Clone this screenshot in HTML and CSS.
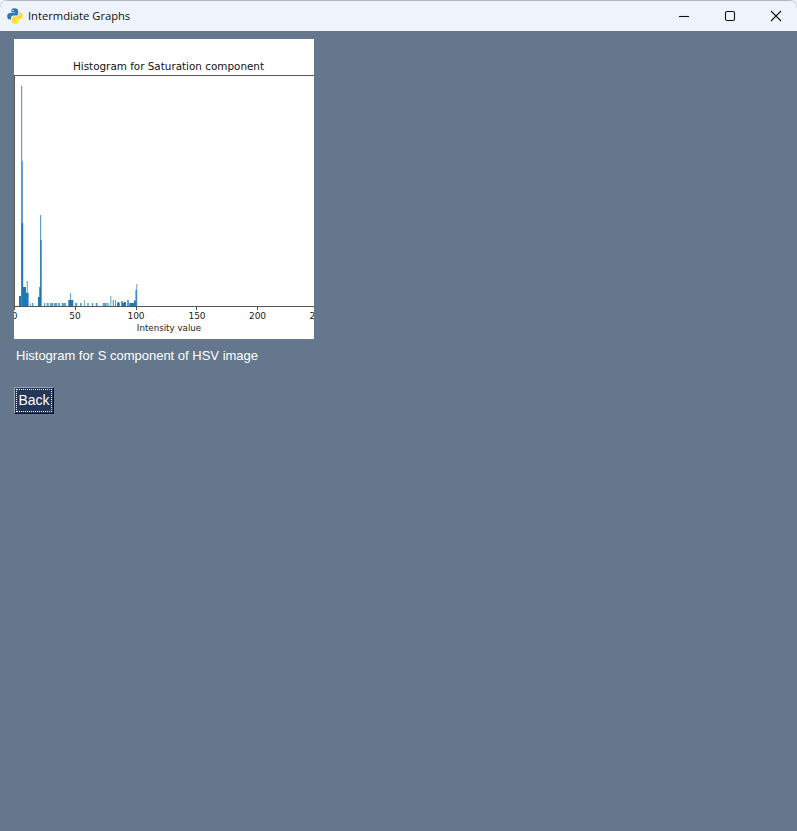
FILE: index.html
```html
<!DOCTYPE html>
<html lang="en">
<head>
<meta charset="utf-8">
<title>Intermdiate Graphs</title>
<link rel="stylesheet" href="styles.css">
</head>
<body>
<div class="window">
  <header class="titlebar">
    <svg class="app-icon" width="16" height="16" viewBox="0 0 16 16">
      <path class="py-blue" d="M7.800 0.300C4.800 0.300 4.400 1.600 4.400 2.600V4.400H8V5H3C1.500 5 0.200 6.100 0.200 8.200 0.200 10.300 1.400 11.500 2.800 11.500H4V9.800C4 8.500 5.100 7.500 6.400 7.500H9.400C10.400 7.500 11.200 6.700 11.200 5.700V2.700C11.200 1.500 9.900 0.300 7.800 0.300Z"/>
      <circle class="py-eye" cx="6" cy="2.400" r="0.700"/>
      <path class="py-yellow" d="M8.200 15.700C11.200 15.700 11.600 14.400 11.600 13.400V11.600H8V11H13C14.500 11 15.800 9.900 15.800 7.800 15.800 5.700 14.600 4.500 13.200 4.500H12V6.200C12 7.500 10.900 8.500 9.600 8.500H6.600C5.600 8.500 4.800 9.300 4.800 10.300V13.300C4.800 14.500 6.100 15.700 8.200 15.700Z"/>
      <circle class="py-eye" cx="10" cy="13.600" r="0.700"/>
    </svg>
    <span class="window-title">Intermdiate Graphs</span>
    <div class="controls">
      <svg class="control" width="46" height="30" viewBox="0 0 46 30"><path d="M18 15.500H28"/></svg>
      <svg class="control" width="46" height="30" viewBox="0 0 46 30"><rect x="18.500" y="10.500" width="9" height="9" rx="1.500"/></svg>
      <svg class="control" width="46" height="30" viewBox="0 0 46 30"><path d="M18 10L28 20M28 10L18 20"/></svg>
    </div>
  </header>
  <main class="content">
    <svg class="chart" width="300" height="300" viewBox="0 0 300 300">
      <rect class="plot-bg" width="300" height="300"/>
      <text class="chart-title" x="154.500" y="31" text-anchor="middle">Histogram for Saturation component</text>
      <path class="bars-light" d="M7 47H8.200V267H7ZM8 122H9V267H8ZM26 176H27.200V267H26ZM12.700 242H13.800V267H12.700ZM56 254H57V267H56ZM96.300 257H97.300V267H96.300ZM122.300 245H123.300V267H122.300ZM16 264H16.800V267H16ZM18 264H19.400V267H18ZM30 264H31.300V267H30ZM32.700 264H34.700V267H32.700ZM36 264H39.300V267H36ZM40 264H43.300V267H40ZM44.300 264H46V267H44.300ZM47.700 264H52V267H47.700ZM61 264H63.300V267H61ZM66 264H67.700V267H66ZM70 261H70.800V267H70ZM73.300 264H74.700V267H73.300ZM77.700 264H79.300V267H77.700ZM81.700 264H83.700V267H81.700ZM88.700 264H92.700V267H88.700ZM93.300 264H94.700V267H93.300ZM98.700 261H100V267H98.700ZM101 261H102V267H101ZM103 264H106V267H103ZM107 262H109.300V267H107ZM113 261H115V267H113ZM115 264H120V267H115ZM120 261H121V267H120ZM117.700 264H119.300V267H117.700Z"/>
      <path class="bars-dark" d="M5 257H7V267H5ZM7.400 184H9.200V267H7.400ZM9.200 248H12V267H9.200ZM12 254H14.600V267H12ZM24 258H25.700V267H24ZM25.300 248H26.300V267H25.300ZM26.300 201H27.600V267H26.300ZM54.300 261H59.300V267H54.300ZM116 264H120V267H116ZM103.500 263H105V267H103.500ZM108 264H110V267H108ZM110 263H112V267H110ZM120.300 262H122V267H120.300ZM121.500 251H122.700V267H121.500Z"/>
      <path class="axis" d="M0 36.500H300M0.500 36V267M0 267.500H300M0.500 267V271M61.500 267V271M122.500 267V271M182.500 267V271M243.500 267V271"/>
      <text class="tick" x="0.500" y="280" text-anchor="middle">0</text>
      <text class="tick" x="61" y="280" text-anchor="middle">50</text>
      <text class="tick" x="122" y="280" text-anchor="middle">100</text>
      <text class="tick" x="183" y="280" text-anchor="middle">150</text>
      <text class="tick" x="243.500" y="280" text-anchor="middle">200</text>
      <text class="tick" x="304" y="280" text-anchor="middle">250</text>
      <text class="label" x="155" y="292" text-anchor="middle">Intensity value</text>
    </svg>
    <p class="caption">Histogram for S component of HSV image</p>
    <button class="back" type="button"><span class="back-focus">Back</span></button>
  </main>
</div>
</body>
</html>
```

FILE: styles.css
```css
html, body {
  margin: 0;
  height: 100%;
  background: #f0f0f0;
}
.window {
  display: flex;
  flex-direction: column;
  height: 831px;
  overflow: hidden;
  background: #65778c;
  border-radius: 8px 8px 0 0;
}
.titlebar {
  display: flex;
  align-items: center;
  height: 30px;
  flex: none;
  padding: 0 0 0 7px;
  background: #eff3fb;
  border-top: 1px solid #b4b6ba;
  font: 11.2px "Open Sans", "Liberation Sans", sans-serif;
  color: #111;
}
.app-icon { flex: none; }
.py-blue { fill: #3276b8; }
.py-yellow { fill: #ffd83e; }
.py-eye { fill: #eff3fb; }
.window-title {
  margin-left: 5px;
  padding-bottom: 2px;
}
.controls {
  display: flex;
  margin-left: auto;
  margin-right: -2px;
}
.control {
  display: block;
  flex: none;
  fill: none;
  stroke: #111;
  stroke-width: 1.1;
}
.content {
  display: flex;
  flex-direction: column;
  align-items: flex-start;
  padding: 8px 14px;
}
.chart { display: block; }
.plot-bg { fill: #fff; }
.chart-title {
  font: 10.4px "DejaVu Sans", sans-serif;
  fill: #111;
}
.tick {
  font: 9px "DejaVu Sans", sans-serif;
  fill: #222;
}
.label {
  font: 8.700px "DejaVu Sans", sans-serif;
  fill: #222;
}
.axis {
  fill: none;
  stroke: #555;
  stroke-width: 1;
}
.bars-light { fill: #1f77b4; opacity: .7; }
.bars-dark { fill: #1f77b4; }
.caption {
  margin: 8px 0 0 2px;
  font: 13px/18px "Liberation Sans", Arial, sans-serif;
  color: #fff;
}
.back {
  display: block;
  box-sizing: border-box;
  width: 40px;
  height: 27px;
  margin: 22px 0 0;
  padding: 2px;
  background: #24365a;
  border: 1px solid;
  border-color: #9aa5b4 #0c1220 #0c1220 #9aa5b4;
  color: #fff;
  font: 14px/19px "Liberation Sans", Arial, sans-serif;
}
.back-focus {
  display: flex;
  align-items: center;
  justify-content: center;
  height: 100%;
  box-sizing: border-box;
  outline: 1px dotted #fff;
}
```
